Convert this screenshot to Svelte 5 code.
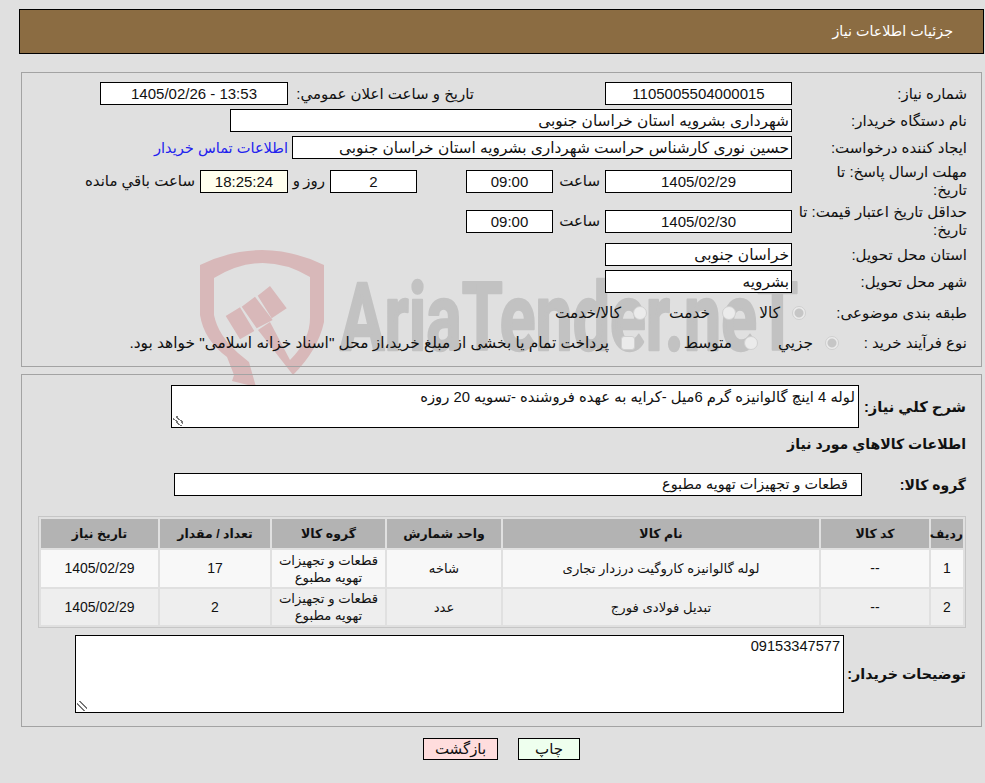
<script>
	const rows = [
		{
			no: '1',
			name: 'لوله گالوانیزه کاروگیت درزدار تجاری',
			unit: 'شاخه',
			qty: '17'
		},
		{ no: '2', name: 'تبدیل فولادی فورج', unit: 'عدد', qty: '2' }
	];
</script>

<div class="page" dir="rtl">
	<svg class="watermark" width="650" height="160" viewBox="0 0 650 160" aria-hidden="true">
		<path
			class="shield"
			d="M0 15 Q62 -15 124 15 L124 72 Q118 100 93 125 L58 80 L70 72 L90 110 Q110 90 110 68 L110 27 Q62 -1.5 14 28 L14 65 Q18 85 38 103 L49 112 L56 137 L32 131 L34 125 L27 107 Q4 90 0 65 Z"
		/>
		<path
			class="shield"
			d="M25.7 66 L40 57.3 L54.3 81 L40 89.3 Z M41.7 56.7 L55 46.7 L72.7 70 L56.7 78.3 Z M57.7 45.7 L70 36 L86.7 58.3 L71.7 68.3 Z"
		/>
		<text class="brand" x="140" y="100" textLength="458" lengthAdjust="spacingAndGlyphs">AriaTender.neT</text>
	</svg>

	<header class="title">جزئیات اطلاعات نیاز</header>

	<section class="panel need">
		<div class="row">
			<div class="label">شماره نیاز:</div>
			<div class="field center w187">1105005504000015</div>
			<div class="label publish">تاريخ و ساعت اعلان عمومي:</div>
			<div class="field center w188">13:53 - 1405/02/26</div>
		</div>
		<div class="row">
			<div class="label">نام دستگاه خریدار:</div>
			<div class="field w562">شهرداری بشرویه استان خراسان جنوبی</div>
		</div>
		<div class="row">
			<div class="label">ایجاد کننده درخواست:</div>
			<div class="field w500">حسین نوری کارشناس حراست شهرداری بشرویه استان خراسان جنوبی</div>
			<a class="contact" href="#top">اطلاعات تماس خریدار</a>
		</div>
		<div class="row tall">
			<div class="label">مهلت ارسال پاسخ: تا<br />تاریخ:</div>
			<div class="field center w187">1405/02/29</div>
			<div class="unit hour">ساعت</div>
			<div class="field center w87">09:00</div>
			<div class="field center w87 days">2</div>
			<div class="unit day">روز و</div>
			<div class="field center w88 clock">18:25:24</div>
			<div class="unit left">ساعت باقي مانده</div>
		</div>
		<div class="row tall">
			<div class="label">حداقل تاریخ اعتبار قیمت: تا<br />تاریخ:</div>
			<div class="field center w187">1405/02/30</div>
			<div class="unit hour">ساعت</div>
			<div class="field center w87">09:00</div>
		</div>
		<div class="row">
			<div class="label">استان محل تحویل:</div>
			<div class="field w187">خراسان جنوبی</div>
		</div>
		<div class="row">
			<div class="label">شهر محل تحویل:</div>
			<div class="field w187">بشرویه</div>
		</div>
		<div class="row choice topic-row">
			<div class="label">طبقه بندی موضوعی:</div>
			<span class="radio on topic"></span>
			<span class="opt w56">کالا</span>
			<span class="radio"></span>
			<span class="opt w75">خدمت</span>
			<span class="radio"></span>
			<span class="opt">کالا/خدمت</span>
		</div>
		<div class="row choice">
			<div class="label">نوع فرآیند خرید :</div>
			<span class="radio on method"></span>
			<span class="opt w67">جزيي</span>
			<span class="radio"></span>
			<span class="opt w109">متوسط</span>
			<span class="check"></span>
			<span class="opt">پرداخت تمام یا بخشی از مبلغ خرید،از محل "اسناد خزانه اسلامی" خواهد بود.</span>
		</div>
	</section>

	<section class="panel goods">
		<div class="summary">
			<div class="strong">شرح کلي نياز:</div>
			<div class="area short">لوله 4 اینچ گالوانیزه گرم 6میل -کرایه به عهده فروشنده -تسویه 20 روزه<span class="grip"></span></div>
		</div>
		<h2 class="strong heading">اطلاعات کالاهاي مورد نياز</h2>
		<div class="group">
			<div class="strong">گروه کالا:</div>
			<div class="field group-value">قطعات و تجهیزات تهویه مطبوع</div>
		</div>

		<table class="items">
			<thead>
				<tr>
					<th class="c1">ردیف</th>
					<th class="c2">کد کالا</th>
					<th class="c3">نام کالا</th>
					<th class="c4">واحد شمارش</th>
					<th class="c5">گروه کالا</th>
					<th class="c6">تعداد / مقدار</th>
					<th class="c7">تاریخ نیاز</th>
				</tr>
			</thead>
			<tbody>
				{#each rows as row}
					<tr>
						<td class="num">{row.no}</td>
						<td class="num">--</td>
						<td>{row.name}</td>
						<td>{row.unit}</td>
						<td>قطعات و تجهیزات تهویه مطبوع</td>
						<td class="num">{row.qty}</td>
						<td class="num">1405/02/29</td>
					</tr>
				{/each}
			</tbody>
		</table>

		<div class="notes">
			<div class="strong">توضیحات خریدار:</div>
			<div class="area tall-area">09153347577<span class="grip"></span></div>
		</div>
	</section>

	<div class="actions">
		<button class="print">چاپ</button>
		<button class="back">بازگشت</button>
	</div>
</div>

<style>
	:global(body) {
		margin: 0;
		background: #e0e0e0;
	}
	.page {
		position: relative;
		box-sizing: border-box;
		height: 783px;
		padding: 9px 1px 0 19px;
		font-family: 'Liberation Sans', 'DejaVu Sans', sans-serif;
		font-size: 15px;
		color: #111;
		overflow: hidden;
	}
	.watermark {
		position: absolute;
		left: 200px;
		top: 250px;
		overflow: visible;
		direction: ltr;
	}
	.shield {
		fill: #d8b8b9;
	}
	.brand {
		direction: ltr;
		fill: #c2c2c2;
		stroke: #c2c2c2;
		stroke-width: 2.5px;
		stroke-linejoin: round;
		font-family: 'Roboto', sans-serif;
		font-weight: 700;
		font-size: 94px;
	}
	.title {
		box-sizing: border-box;
		height: 45px;
		line-height: 43px;
		padding-right: 30px;
		background: #8b6c42;
		border: 1px solid #000;
		color: #fff;
		font-size: 14.3px;
	}
	.panel {
		position: relative;
		box-sizing: border-box;
		margin: 0 2px;
		border: 1px solid #a3a3a3;
	}
	.need {
		margin-top: 18px;
		height: 295px;
		padding: 9px 14px 0 0;
		display: flex;
		flex-direction: column;
		gap: 4px;
	}
	.row {
		display: flex;
		align-items: center;
		min-height: 23px;
	}
	.row.tall {
		height: 36px;
	}
	.row.choice {
		box-sizing: border-box;
		height: 28px;
	}
	.row.topic-row {
		padding-top: 4px;
	}
	.label {
		width: 175px;
		flex: none;
		line-height: 18px;
		box-sizing: border-box;
	}
	.field {
		box-sizing: border-box;
		height: 23px;
		line-height: 21px;
		flex: none;
		background: #fff;
		border: 1px solid #000;
		padding: 0 2px;
		white-space: nowrap;
		overflow: hidden;
		font-size: 15.4px;
	}
	.center {
		text-align: center;
		font-size: 15px;
	}
	.w187 {
		width: 187px;
	}
	.w188 {
		width: 188px;
	}
	.w562 {
		width: 562px;
	}
	.w500 {
		width: 500px;
	}
	.w87 {
		width: 87px;
	}
	.w88 {
		width: 88px;
	}
	.publish {
		width: 186px;
		margin-right: 131px;
		padding-left: 5px;
	}
	.contact {
		margin-right: 4px;
		color: #2222ee;
		font-size: 14.6px;
		text-decoration: none;
		white-space: nowrap;
	}
	.unit {
		flex: none;
		white-space: nowrap;
	}
	.hour {
		width: 52px;
		padding-right: 5px;
		box-sizing: border-box;
	}
	.days {
		margin-right: 49px;
	}
	.day {
		width: 42px;
		padding-right: 5px;
		box-sizing: border-box;
		word-spacing: -1px;
	}
	.left {
		margin-right: 5px;
	}
	.clock {
		background: #ffffee;
	}
	.radio,
	.check {
		flex: none;
		box-sizing: border-box;
		width: 14px;
		height: 14px;
		background: #ebebeb;
		border: 1px solid #d0d0d0;
		border-radius: 50%;
	}
	.radio.on {
		background: radial-gradient(circle, #c6c6c6 0 4px, #ebebeb 5px);
	}
	.check {
		border-radius: 3px;
	}
	.radio.topic {
		margin-right: -14px;
	}
	.radio.method {
		margin-right: -47px;
	}
	.opt {
		flex: none;
		box-sizing: border-box;
		padding-right: 12px;
		white-space: nowrap;
		font-size: 15.4px;
	}
	.w56 {
		width: 56px;
	}
	.w75 {
		width: 75px;
	}
	.w67 {
		width: 67px;
	}
	.w109 {
		width: 109px;
	}
	.goods {
		margin-top: 7px;
		height: 353px;
		padding: 10px 15px 0 15px;
	}
	.strong {
		font-weight: 700;
		font-size: 14.7px;
	}
	.summary,
	.notes {
		display: flex;
		align-items: center;
	}
	.summary .strong {
		width: 107px;
		flex: none;
		white-space: nowrap;
	}
	.area {
		position: relative;
		box-sizing: border-box;
		background: #fff;
		border: 1px solid #000;
		padding: 2px 3px;
		font-size: 14.8px;
	}
	.short {
		width: 688px;
		height: 43px;
	}
	.grip {
		position: absolute;
		left: 1px;
		bottom: 1px;
		width: 10px;
		height: 10px;
		background: linear-gradient(45deg, transparent 35%, #777 35% 45%, transparent 45% 60%, #777 60% 70%, transparent 70%);
	}
	.heading {
		margin: 0;
		height: 45px;
		line-height: 32px;
		font-size: 14.1px;
	}
	.group {
		display: flex;
		align-items: center;
	}
	.group .strong {
		width: 104px;
		flex: none;
		font-size: 14px;
	}
	.group-value {
		width: 688px;
		padding-right: 13px;
		font-size: 14.4px;
	}
	.items {
		box-sizing: border-box;
		width: 928px;
		margin-top: 20px;
		table-layout: fixed;
		border-collapse: separate;
		border-spacing: 2px;
		border: 1px solid #c6c6c6;
		font-size: 13.2px;
	}
	.items th {
		height: 29px;
		padding: 0;
		background: #b3b3b3;
		font-weight: 700;
		font-size: 12.5px;
		white-space: nowrap;
	}
	.items td {
		height: 37px;
		padding: 0 2px;
		text-align: center;
		line-height: 17px;
		background: #f8f8f8;
	}
	.items td.num {
		font-size: 14px;
	}
	.items tbody tr:nth-child(2) td {
		height: 36px;
		background: #eeeeee;
	}
	.c1 {
		width: 32px;
	}
	.c2 {
		width: 108px;
	}
	.c3 {
		width: 316px;
	}
	.c4 {
		width: 114px;
	}
	.c5 {
		width: 113px;
	}
	.c6 {
		width: 110px;
	}
	.notes {
		margin-top: 7px;
	}
	.notes .strong {
		width: 122px;
		flex: none;
		white-space: nowrap;
		font-size: 14.3px;
	}
	.tall-area {
		width: 769px;
		height: 78px;
		font-size: 14.6px;
	}
	.actions {
		display: flex;
		justify-content: center;
		gap: 20px;
		margin-top: 11px;
	}
	button {
		box-sizing: border-box;
		height: 22px;
		padding: 0;
		border: 1px solid #000;
		font: inherit;
		color: #111;
	}
	.print {
		width: 62px;
		background: #eeffee;
	}
	.back {
		width: 75px;
		background: #ffdddd;
	}
</style>
